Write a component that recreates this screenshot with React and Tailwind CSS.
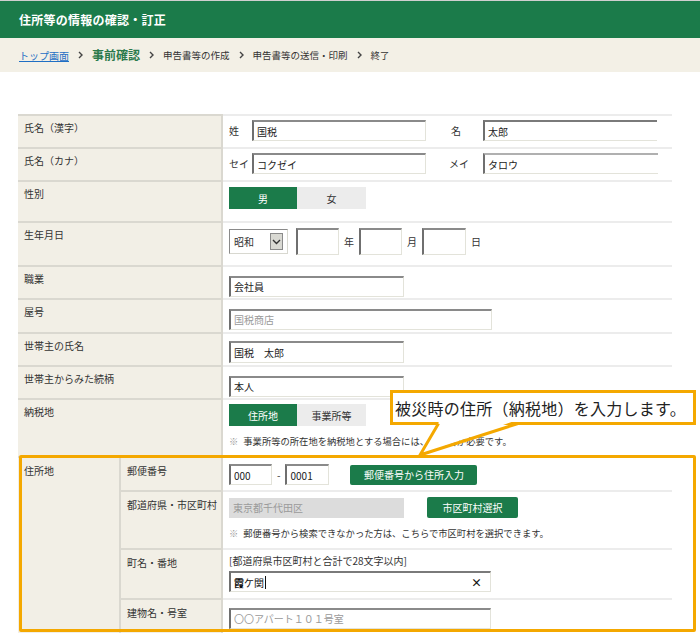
import React from 'react';

const inputCls =
  "h-[21px] border-t-2 border-l-2 border-b border-r border-t-[#8a8a8a] border-l-[#6f6f6f] border-b-[#e3e3da] border-r-[#e3e3da] bg-white px-[3px] text-[10px] text-[#222] outline-none placeholder:text-[#9a9a9a] font-['Noto_Sans_CJK_JP',sans-serif]";

const Field = ({ w, value, placeholder, h = 'h-[21px]' }) => (
  <input readOnly value={value || ''} placeholder={placeholder} className={`${inputCls} ${w} ${h}`} />
);

const Row = ({ label, h, pt, children }) => (
  <div className={`flex ${h}`}>
    <div className="w-[205px] shrink-0 border-t-2 border-r-2 border-t-[#dad8d0] border-r-[#dad8d0] bg-[#f2efe6] pl-[6px] pt-[5px] text-[10px] leading-[14px] text-[#333]">
      {label}
    </div>
    <div className={`flex-1 border-t-2 border-t-[#ececec] pl-[6px] ${pt}`}>{children}</div>
  </div>
);

const SubRow = ({ label, h, pt, children }) => (
  <div className={`flex ${h}`}>
    <div className="w-[102px] shrink-0 border-t-2 border-r-2 border-t-[#dad8d0] border-r-[#dad8d0] bg-[#f2efe6] pl-[6px] pt-[6px] text-[10px] leading-[14px] text-[#333]">
      {label}
    </div>
    <div className={`flex-1 border-t-2 border-t-[#ececec] pl-[6px] ${pt}`}>{children}</div>
  </div>
);

const Toggle = ({ left, right }) => (
  <div className="flex text-[10px]">
    <div className="flex h-[22px] w-[68px] items-center justify-center bg-[#1b7b4a] text-white">{left}</div>
    <div className="flex h-[22px] w-[69px] items-center justify-center bg-[#ececec] text-[#333]">{right}</div>
  </div>
);

const Chevron = () => (
  <svg className="mx-[9px]" width="5" height="8" viewBox="0 0 5 8">
    <polyline points="1,1 4,4 1,7" fill="none" stroke="#444" strokeWidth="1.4" />
  </svg>
);

export default function App() {
  return (
    <div className="relative h-[633px] w-[700px] overflow-hidden bg-white font-['Noto_Sans_CJK_JP',sans-serif] text-[#333]">
      {/* header */}
      <div className="flex h-[38px] items-center border-t border-t-[#cfcfcf] bg-[#1b7b4a] pl-[19px] text-[12px] font-bold tracking-[0.25px] text-white">
        住所等の情報の確認・訂正
      </div>

      {/* breadcrumb */}
      <div className="flex h-[34px] items-center bg-[#f3f0e6] pl-[19px] text-[9.5px] text-[#333]">
        <span className="text-[10px] text-[#1f6fc4] underline">トップ画面</span>
        <Chevron />
        <span className="text-[12px] font-bold text-[#2b7a4b]">事前確認</span>
        <Chevron />
        <span>申告書等の作成</span>
        <Chevron />
        <span>申告書等の送信・印刷</span>
        <Chevron />
        <span>終了</span>
      </div>

      {/* form table */}
      <div className="ml-[18px] mt-[42px] w-[654px]">
        <Row label="氏名（漢字）" h="h-[33px]" pt="pt-[4px]">
          <div className="flex items-center text-[10px]">
            <span className="w-[23px]">姓</span>
            <Field w="w-[174px]" value="国税" />
            <span className="ml-[25px] w-[32px]">名</span>
            <input readOnly value="太郎" className="h-[21px] w-[174px] border-t-2 border-l-2 border-b border-t-[#7a7a7a] border-l-[#6f6f6f] border-b-[#e3e3da] bg-white px-[3px] text-[10px] text-[#222] outline-none font-['Noto_Sans_CJK_JP',sans-serif]" />
          </div>
        </Row>
        <Row label="氏名（カナ）" h="h-[33px]" pt="pt-[4px]">
          <div className="flex items-center text-[10px]">
            <span className="w-[23px]">セイ</span>
            <Field w="w-[174px]" value="コクゼイ" />
            <span className="ml-[23px] w-[34px]">メイ</span>
            <input readOnly value="タロウ" className="h-[21px] w-[175px] border-t-2 border-l-2 border-b border-t-[#b0b0b0] border-l-[#6f6f6f] border-b-[#e3e3da] bg-white px-[3px] text-[10px] text-[#222] outline-none font-['Noto_Sans_CJK_JP',sans-serif]" />
          </div>
        </Row>
        <Row label="性別" h="h-[41px]" pt="pt-[5px]">
          <Toggle left="男" right="女" />
        </Row>
        <Row label="生年月日" h="h-[44px]" pt="pt-[5px]">
          <div className="flex items-center text-[10px]">
            <div className="flex h-[25px] w-[59px] items-center justify-between border-t border-l border-b border-r border-t-[#8a8a8a] border-l-[#8a8a8a] border-b-[#d8d8d0] border-r-[#d8d8d0] bg-white pl-[4px] pr-[4px]">
              <span>昭和</span>
              <div className="flex h-[17px] w-[13px] items-center justify-center border border-[#8a8a8a] bg-[#d9d9d3]">
                <svg width="9" height="6" viewBox="0 0 9 6">
                  <polyline points="1,1 4.5,4.5 8,1" fill="none" stroke="#333" strokeWidth="1.4" />
                </svg>
              </div>
            </div>
            <input readOnly className={`${inputCls} ml-[8px] w-[43px]`} style={{ height: 27 }} />
            <span className="mx-[5px]">年</span>
            <input readOnly className={`${inputCls} w-[43px]`} style={{ height: 27 }} />
            <span className="mx-[5px]">月</span>
            <input readOnly className={`${inputCls} w-[44px]`} style={{ height: 27 }} />
            <span className="ml-[5px]">日</span>
          </div>
        </Row>
        <Row label="職業" h="h-[33px]" pt="pt-[5px]">
          <Field w="w-[175px]" value="会社員" />
        </Row>
        <Row label="屋号" h="h-[34px]" pt="pt-[5px]">
          <Field w="w-[263px]" placeholder="国税商店" />
        </Row>
        <Row label="世帯主の氏名" h="h-[33px]" pt="pt-[4px]">
          <Field w="w-[175px]" value="国税　太郎" h="h-[22px]" />
        </Row>
        <Row label="世帯主からみた続柄" h="h-[33px]" pt="pt-[5px]">
          <Field w="w-[175px]" value="本人" />
        </Row>
        <Row label="納税地" h="h-[58px]" pt="pt-[4px]">
          <Toggle left="住所地" right="事業所等" />
          <p className="mt-[8px] text-[9.3px] leading-[14px]">
            <span className="mr-[5px] text-[#999]">※</span>事業所等の所在地を納税地とする場合には、届出書が必要です。
          </p>
        </Row>

        {/* address block */}
        <div className="flex">
          <div className="w-[103px] shrink-0 border-t-2 border-r-2 border-t-[#dad8d0] border-r-[#dad8d0] bg-[#f2efe6] pl-[6px] pt-[6px] text-[10px] leading-[14px]">
            住所地
          </div>
          <div className="flex-1">
            <SubRow label="郵便番号" h="h-[34px]" pt="pt-[6px]">
              <div className="flex items-center text-[10px]">
                <Field w="w-[43px]" value="000" h="h-[20px]" />
                <span className="mx-[5px]">-</span>
                <Field w="w-[44px]" value="0001" h="h-[20px]" />
                <div className="ml-[21px] flex h-[20px] w-[127px] items-center justify-center rounded-[2px] bg-[#1b7b4a] text-white">
                  郵便番号から住所入力
                </div>
              </div>
            </SubRow>
            <SubRow label="都道府県・市区町村" h="h-[58px]" pt="pt-[5px]">
              <div className="flex items-center text-[10px]">
                <div className="flex h-[20px] w-[175px] items-center bg-[#dcdcdc] pl-[4px] text-[#9a9a9a]">東京都千代田区</div>
                <div className="ml-[23px] flex h-[21px] w-[91px] items-center justify-center rounded-[2px] bg-[#1b7b4a] text-white">
                  市区町村選択
                </div>
              </div>
              <p className="mt-[8px] text-[9.3px] leading-[14px]">
                <span className="mr-[5px] text-[#999]">※</span>郵便番号から検索できなかった方は、こちらで市区町村を選択できます。
              </p>
            </SubRow>
            <SubRow label="町名・番地" h="h-[50px]" pt="pt-[4px]">
              <p className="text-[10px] leading-[14px]">[都道府県市区町村と合計で28文字以内]</p>
              <div className="mt-[3px] flex h-[21px] w-[262px] items-center justify-between border-t-2 border-l-2 border-b border-r border-t-[#7a7a7a] border-l-[#6f6f6f] border-b-[#e3e3da] border-r-[#e3e3da] bg-white pl-[3px] pr-[8px] text-[10px] text-[#111]">
                <span className="flex items-center">
                  <span className="font-bold">霞</span>ケ関
                  <span className="ml-[1px] inline-block h-[13px] w-px bg-[#111]" />
                </span>
                <span className="text-[11px] font-bold">×</span>
              </div>
            </SubRow>
            <SubRow label="建物名・号室" h="h-[40px]" pt="pt-[4px]">
              <Field w="w-[262px]" placeholder="〇〇アパート１０１号室" />
            </SubRow>
          </div>
        </div>
      </div>

      {/* annotation: highlight frame */}
      <div className="pointer-events-none absolute left-[19px] top-[455px] h-[177px] w-[677px] rounded-[2px] border-[3px] border-[#f4a800]" />

      {/* annotation: callout */}
      <div className="absolute left-[390px] top-[390px] flex h-[35px] w-[306px] items-center border-[3px] border-[#f4a800] bg-white pl-[2px] text-[16px] leading-[20px] tracking-[0.25px] text-[#222]">
        被災時の住所（納税地）を入力します。
      </div>
      <svg className="absolute left-[400px] top-[418px]" width="130" height="42" viewBox="0 0 130 42">
        <polygon points="40,2 117,2 20,37" fill="#fff" />
        <polyline points="38.5,5.5 20,37 118,5.5" fill="none" stroke="#f4a800" strokeWidth="3" strokeLinejoin="miter" />
      </svg>
    </div>
  );
}
